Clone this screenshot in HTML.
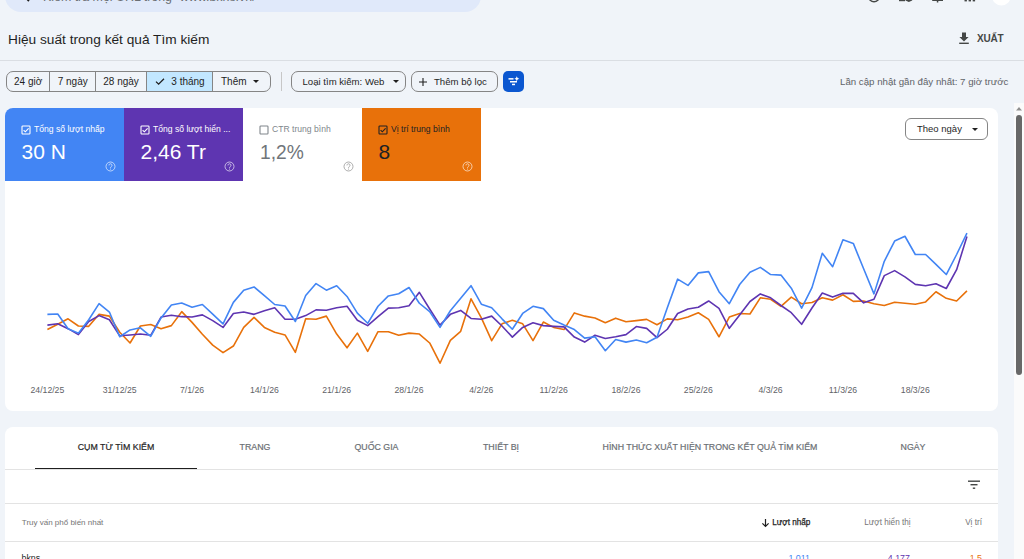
<!DOCTYPE html>
<html><head><meta charset="utf-8">
<style>
*{box-sizing:border-box;margin:0;padding:0}
html,body{width:1024px;height:559px;overflow:hidden}
body{background:#f0f4f9;font-family:"Liberation Sans",sans-serif;position:relative;color:#1f1f1f}
.a{position:absolute;white-space:nowrap}
.search{left:5px;top:-20px;width:476px;height:32px;border-radius:16px;background:#e0e9fa}
.ph{left:43px;top:-10px;font-size:12.4px;color:#6b6f74;line-height:14px}
.title{left:8px;top:32px;font-size:13.7px;color:#1f1f1f;line-height:16px}
.xuat{left:977px;top:33px;letter-spacing:-0.2px;font-size:10px;font-weight:bold;color:#444746;line-height:11px}
.divider{left:0;top:60px;width:1024px;height:1px;background:#dadee3}
.chips{left:6px;top:71px;width:265px;height:21px;border:1px solid #858585;border-radius:7px;overflow:hidden}
.chip{top:0;height:19px;font-size:10px;line-height:19px;color:#1f1f1f;text-align:center}
.chip.bd{border-right:1px solid #858585}
.chip.sel{background:#c2e7ff}
.vsep{left:281px;top:72px;width:1px;height:19px;background:#c7c7c7}
.pill{top:71px;height:21px;border:1px solid #858585;border-radius:7px}
.ptxt{top:0;font-size:9.6px;line-height:19px;color:#1f1f1f}
.fbtn{left:503px;top:71px;width:21px;height:21px;border-radius:5px;background:#0b57d0}
.upd{left:840px;top:75.5px;font-size:9.7px;color:#5f6368;line-height:12px}
.card{left:5px;top:108px;width:993px;height:302.5px;background:#fff;border-radius:8px;overflow:hidden}
.metric{top:0;height:73px;width:119px;overflow:hidden}
.mlabel{left:29px;top:16px;font-size:8.6px;line-height:11px}
.mval{left:16.5px;top:32px;font-size:21px;line-height:24px}
.mline{left:0;top:72px;width:476px;height:1px;background:#e3e3e3}
.dd{left:900px;top:9.7px;width:83px;height:22.3px;border:1px solid #858585;border-radius:6px}
.ddt{left:11px;top:0.8px;font-size:9.5px;line-height:19.5px;color:#1f1f1f}
.dl{top:276.8px;width:60px;text-align:center;font-size:8.7px;color:#5f6368;line-height:11px}
.tabs{left:5px;top:427px;width:993px;height:140px;background:#fff;border-radius:8px;overflow:hidden}
.tab{top:14.2px;width:300px;text-align:center;font-size:8.8px;line-height:12px;color:#6b6f74;-webkit-text-stroke:0.2px currentColor}
.tab.on{color:#1f1f1f}
.uline{left:30px;top:40.5px;width:162px;height:2.5px;background:#1f1f1f}
.hr{left:0;width:993px;height:1px;background:#e3e3e3}
.th{top:90.7px;font-size:8.2px;line-height:10px;color:#5f6368}
.td{top:124.5px;font-size:8.9px;line-height:12px}
.scroll{left:1014px;top:103px;width:10px;height:456px;background:#fbfbfb}
.thumb{left:2px;top:12px;width:6px;height:260px;border-radius:3px;background:#686868}
</style></head><body>
<div class="a search"></div>
<svg class="a" style="left:17px;top:-11px" width="14" height="14" viewBox="0 0 14 14"><circle cx="6" cy="6" r="4" fill="none" stroke="#1f1f1f" stroke-width="1.6"/><path d="M9 9 L12 12" stroke="#1f1f1f" stroke-width="1.8"/></svg>
<div class="a ph">Kiểm tra mọi URL trong "www.bkns.vn/"</div>
<svg class="a" style="left:860px;top:0" width="160" height="8" viewBox="0 0 160 8">
 <circle cx="14" cy="-3.5" r="5.3" fill="none" stroke="#444746" stroke-width="1.4"/>
 <rect x="39" y="-1" width="6" height="2.2" fill="#444746"/><path d="M45.5 -1 H52.2 V0.6 L48.8 2 L45.5 0.6 Z" fill="#444746"/>
 <rect x="72.2" y="-1" width="10.8" height="2" fill="#444746"/><rect x="76.8" y="0.5" width="1.5" height="2" fill="#444746"/>
 <rect x="104.5" y="-1" width="2.4" height="2.4" fill="#444746"/><rect x="108.6" y="-1" width="2.4" height="2.4" fill="#444746"/><rect x="112.7" y="-1" width="2.4" height="2.4" fill="#444746"/>
 <circle cx="141.4" cy="-4" r="9.4" fill="#fff"/>
</svg>
<div class="a title">Hiệu suất trong kết quả Tìm kiếm</div>
<svg class="a" style="left:958px;top:31px" width="12" height="14" viewBox="0 0 12 14"><path d="M4 1.5 H8 V6 H10.6 L6 10.6 L1.4 6 H4 Z" fill="#444746"/><rect x="1.2" y="11.6" width="9.6" height="1.4" fill="#444746"/></svg>
<div class="a xuat">XUẤT</div>
<div class="a divider"></div>
<div class="a chips">
 <div class="a chip bd" style="left:0;width:43.3px">24 giờ</div>
 <div class="a chip bd" style="left:43.3px;width:45.9px">7 ngày</div>
 <div class="a chip bd" style="left:89.2px;width:50.8px">28 ngày</div>
 <div class="a chip sel bd" style="left:140px;width:66px"><svg class="a" style="left:8.3px;top:5px" width="10" height="9" viewBox="0 0 10 9"><path d="M1 4.6 L3.6 7.2 L9 1.8" fill="none" stroke="#1f1f1f" stroke-width="1.3"/></svg><span class="a" style="left:24.3px;top:0">3 tháng</span></div>
 <div class="a chip" style="left:206px;width:58px;text-align:left;padding-left:8px">Thêm</div>
 <svg class="a" style="left:244.5px;top:7px" width="8" height="5"><path d="M1 1 L7 1 L4 4 Z" fill="#1f1f1f"/></svg>
</div>
<div class="a vsep"></div>
<div class="a pill" style="left:291px;width:115px"><div class="a ptxt" style="left:10.5px">Loại tìm kiếm: Web</div><svg class="a" style="left:100px;top:7px" width="8" height="5"><path d="M1 1 L7 1 L4 4 Z" fill="#1f1f1f"/></svg></div>
<div class="a pill" style="left:411px;width:87px"><svg class="a" style="left:6px;top:5px" width="10" height="10"><path d="M5 1 V9 M1 5 H9" stroke="#1f1f1f" stroke-width="1.1"/></svg><div class="a ptxt" style="left:22px">Thêm bộ lọc</div></div>
<div class="a fbtn"><svg class="a" style="left:0;top:0" width="21" height="21" viewBox="0 0 21 21"><rect x="5.5" y="7.1" width="5" height="1.5" fill="#fff"/><rect x="7" y="10" width="7" height="1.5" fill="#fff"/><rect x="9" y="12.7" width="3" height="1.5" fill="#fff"/><path d="M13.8 5.2 L14.6 6.9 L16.3 7.7 L14.6 8.5 L13.8 10.2 L13 8.5 L11.3 7.7 L13 6.9 Z" fill="#fff"/></svg></div>
<div class="a upd">Lần cập nhật gần đây nhất: 7 giờ trước</div>
<div class="a card">
 <div class="a mline"></div>
 <div class="a metric" style="left:0px;background:#4285f4;color:#fff"><svg class="a" style="left:15.7px;top:16.6px" width="10" height="10" viewBox="0 0 10 10"><rect x="1" y="1" width="8" height="8" rx="0.8" fill="none" stroke="#fff" stroke-width="1.1"/><path d="M2.6 5.1 L4.3 6.8 L7.6 3.4" fill="none" stroke="#fff" stroke-width="1.15"/></svg><div class="a mlabel">Tổng số lượt nhấp</div><div class="a mval">30 N</div><svg class="a" style="left:100px;top:53px" width="11" height="11" viewBox="0 0 11 11"><circle cx="5.5" cy="5.5" r="4.5" fill="none" stroke="rgba(255,255,255,.75)" stroke-width="0.85"/><path d="M4.0 4.4 A1.5 1.5 0 1 1 6.6 5.3 C6.0 5.8 5.5 6.0 5.5 6.8" fill="none" stroke="rgba(255,255,255,.75)" stroke-width="0.85"/><circle cx="5.5" cy="8.0" r="0.55" fill="rgba(255,255,255,.75)"/></svg></div><div class="a metric" style="left:119px;background:#5e35b1;color:#fff"><svg class="a" style="left:15.7px;top:16.6px" width="10" height="10" viewBox="0 0 10 10"><rect x="1" y="1" width="8" height="8" rx="0.8" fill="none" stroke="#fff" stroke-width="1.1"/><path d="M2.6 5.1 L4.3 6.8 L7.6 3.4" fill="none" stroke="#fff" stroke-width="1.15"/></svg><div class="a mlabel">Tổng số lượt hiển ...</div><div class="a mval">2,46 Tr</div><svg class="a" style="left:100px;top:53px" width="11" height="11" viewBox="0 0 11 11"><circle cx="5.5" cy="5.5" r="4.5" fill="none" stroke="rgba(255,255,255,.75)" stroke-width="0.85"/><path d="M4.0 4.4 A1.5 1.5 0 1 1 6.6 5.3 C6.0 5.8 5.5 6.0 5.5 6.8" fill="none" stroke="rgba(255,255,255,.75)" stroke-width="0.85"/><circle cx="5.5" cy="8.0" r="0.55" fill="rgba(255,255,255,.75)"/></svg></div><div class="a metric" style="left:238px;background:#fff;color:#80868b"><svg class="a" style="left:15.7px;top:16.6px" width="10" height="10" viewBox="0 0 10 10"><rect x="1" y="1" width="8" height="8" rx="0.8" fill="none" stroke="#80868b" stroke-width="1.1"/></svg><div class="a mlabel">CTR trung bình</div><div class="a mval" style="transform:scaleX(0.915);transform-origin:0 0;color:#70757a">1,2%</div><svg class="a" style="left:100px;top:53px" width="11" height="11" viewBox="0 0 11 11"><circle cx="5.5" cy="5.5" r="4.5" fill="none" stroke="#9e9e9e" stroke-width="0.85"/><path d="M4.0 4.4 A1.5 1.5 0 1 1 6.6 5.3 C6.0 5.8 5.5 6.0 5.5 6.8" fill="none" stroke="#9e9e9e" stroke-width="0.85"/><circle cx="5.5" cy="8.0" r="0.55" fill="#9e9e9e"/></svg></div><div class="a metric" style="left:357px;background:#e8710a;color:#202124"><svg class="a" style="left:15.7px;top:16.6px" width="10" height="10" viewBox="0 0 10 10"><rect x="1" y="1" width="8" height="8" rx="0.8" fill="none" stroke="#202124" stroke-width="1.1"/><path d="M2.6 5.1 L4.3 6.8 L7.6 3.4" fill="none" stroke="#202124" stroke-width="1.15"/></svg><div class="a mlabel">Vị trí trung bình</div><div class="a mval">8</div><svg class="a" style="left:100px;top:53px" width="11" height="11" viewBox="0 0 11 11"><circle cx="5.5" cy="5.5" r="4.5" fill="none" stroke="rgba(255,255,255,.75)" stroke-width="0.85"/><path d="M4.0 4.4 A1.5 1.5 0 1 1 6.6 5.3 C6.0 5.8 5.5 6.0 5.5 6.8" fill="none" stroke="rgba(255,255,255,.75)" stroke-width="0.85"/><circle cx="5.5" cy="8.0" r="0.55" fill="rgba(255,255,255,.75)"/></svg></div>
 <div class="a dd"><div class="a ddt">Theo ngày</div><svg class="a" style="left:65px;top:8px" width="8" height="5"><path d="M1 1 L7 1 L4 4 Z" fill="#1f1f1f"/></svg></div>
 <svg class="a" style="left:-5px;top:-108px" width="1024" height="559">
  <polyline fill="none" stroke="#e8710a" stroke-width="1.6" stroke-linejoin="round" points="47.40,329.56 57.73,324.19 68.06,318.82 78.40,325.98 88.73,326.34 99.06,314.35 109.39,316.14 119.72,332.24 130.06,342.98 140.39,325.98 150.72,324.55 161.05,328.67 171.38,325.62 181.72,311.66 192.05,322.40 202.38,334.21 212.71,345.13 223.04,352.65 233.38,346.03 243.71,327.41 254.04,317.39 264.37,327.41 274.70,332.24 285.04,334.93 295.37,352.29 305.70,318.82 316.03,319.18 326.36,316.14 336.70,334.03 347.03,347.82 357.36,333.14 367.69,351.39 378.02,331.71 388.36,331.71 398.69,335.29 409.02,333.14 419.35,334.03 429.68,342.98 440.02,363.21 450.35,340.30 460.68,331.35 471.01,298.78 481.34,317.93 491.68,340.66 502.01,323.83 512.34,320.25 522.67,323.83 533.00,340.66 543.34,322.04 553.67,327.41 564.00,329.56 574.33,312.92 584.66,316.14 595.00,317.93 605.33,322.76 615.66,318.15 625.99,321.73 636.32,320.66 646.66,319.40 656.99,324.77 667.32,318.87 677.65,319.76 687.98,317.08 698.32,312.78 708.65,319.40 718.98,336.76 729.31,317.08 739.64,313.50 749.98,314.03 760.31,297.82 770.64,299.25 780.97,306.41 791.30,297.10 801.64,303.72 811.97,302.47 822.30,297.82 832.63,300.14 842.96,294.77 853.30,301.39 863.63,301.04 873.96,303.72 884.29,305.51 894.62,302.29 904.96,303.18 915.29,304.26 925.62,301.93 935.95,291.73 946.28,298.35 956.62,301.04 966.95,290.84"/>
  <polyline fill="none" stroke="#5e35b1" stroke-width="1.6" stroke-linejoin="round" points="47.40,325.09 57.73,323.83 68.06,328.67 78.40,334.57 88.73,321.51 99.06,315.60 109.39,319.72 119.72,335.82 130.06,334.93 140.39,334.03 150.72,335.29 161.05,317.03 171.38,315.24 181.72,316.67 192.05,317.03 202.38,314.88 212.71,320.61 223.04,327.41 233.38,313.45 243.71,312.02 254.04,314.35 264.37,310.77 274.70,307.73 285.04,319.18 295.37,319.18 305.70,315.60 316.03,309.87 326.36,310.23 336.70,307.73 347.03,306.29 357.36,320.25 367.69,325.62 378.02,316.67 388.36,308.08 398.69,307.73 409.02,305.76 419.35,292.33 429.68,308.98 440.02,325.09 450.35,314.35 460.68,310.41 471.01,318.46 481.34,319.18 491.68,316.14 502.01,325.98 512.34,337.08 522.67,327.41 533.00,322.76 543.34,325.62 553.67,326.34 564.00,326.88 574.33,337.08 584.66,342.09 595.00,335.29 605.33,338.51 615.66,336.76 625.99,334.62 636.32,326.56 646.66,328.35 656.99,337.66 667.32,329.25 677.65,313.50 687.98,309.02 698.32,307.23 708.65,300.97 718.98,308.31 729.31,328.35 739.64,314.93 749.98,301.51 760.31,293.88 770.64,297.82 780.97,305.51 791.30,312.67 801.64,324.30 811.97,308.02 822.30,292.98 832.63,297.10 842.96,293.34 853.30,293.34 863.63,302.83 873.96,299.25 884.29,275.62 894.62,270.61 904.96,276.88 915.29,284.39 925.62,285.82 935.95,283.68 946.28,288.51 956.62,269.72 966.95,236.61"/>
  <polyline fill="none" stroke="#4285f4" stroke-width="1.6" stroke-linejoin="round" points="47.40,314.35 57.73,313.99 68.06,328.67 78.40,333.14 88.73,319.72 99.06,303.61 109.39,312.02 119.72,336.72 130.06,329.92 140.39,327.77 150.72,336.36 161.05,317.93 171.38,305.04 181.72,303.07 192.05,307.19 202.38,304.50 212.71,314.17 223.04,323.83 233.38,302.36 243.71,290.19 254.04,286.97 264.37,295.56 274.70,304.50 285.04,305.94 295.37,321.51 305.70,295.56 316.03,283.56 326.36,290.19 336.70,285.71 347.03,296.45 357.36,313.10 367.69,323.30 378.02,306.29 388.36,295.91 398.69,293.77 409.02,287.50 419.35,303.25 429.68,311.66 440.02,327.41 450.35,310.77 460.68,298.24 471.01,285.71 481.34,304.15 491.68,307.73 502.01,318.82 512.34,329.20 522.67,313.45 533.00,306.29 543.34,308.62 553.67,320.25 564.00,325.09 574.33,329.56 584.66,338.15 595.00,336.72 605.33,350.68 615.66,339.45 625.99,342.13 636.32,339.99 646.66,342.67 656.99,337.30 667.32,307.77 677.65,279.14 687.98,285.40 698.32,272.87 708.65,271.62 718.98,291.66 729.31,303.65 739.64,284.50 749.98,272.33 760.31,267.39 770.64,274.55 780.97,275.09 791.30,288.15 801.64,308.20 811.97,287.61 822.30,253.25 832.63,266.67 842.96,239.83 853.30,243.41 863.63,268.82 873.96,293.88 884.29,261.31 894.62,241.08 904.96,236.25 915.29,254.50 925.62,254.50 935.95,264.35 946.28,274.55 956.62,254.50 966.95,233.03"/>
 </svg>
 <div class="a dl" style="left:12.4px">24/12/25</div><div class="a dl" style="left:84.7px">31/12/25</div><div class="a dl" style="left:157.0px">7/1/26</div><div class="a dl" style="left:229.4px">14/1/26</div><div class="a dl" style="left:301.7px">21/1/26</div><div class="a dl" style="left:374.0px">28/1/26</div><div class="a dl" style="left:446.3px">4/2/26</div><div class="a dl" style="left:518.7px">11/2/26</div><div class="a dl" style="left:591.0px">18/2/26</div><div class="a dl" style="left:663.3px">25/2/26</div><div class="a dl" style="left:735.6px">4/3/26</div><div class="a dl" style="left:808.0px">11/3/26</div><div class="a dl" style="left:880.3px">18/3/26</div>
</div>
<div class="a tabs">
 <div class="a tab on" style="left:-39px">CỤM TỪ TÌM KIẾM</div><div class="a tab" style="left:100px">TRANG</div><div class="a tab" style="left:221.5px">QUỐC GIA</div><div class="a tab" style="left:346px">THIẾT BỊ</div><div class="a tab" style="left:555px">HÌNH THỨC XUẤT HIỆN TRONG KẾT QUẢ TÌM KIẾM</div><div class="a tab" style="left:758px">NGÀY</div>
 <div class="a uline"></div>
 <div class="a hr" style="top:42px"></div>
 <svg class="a" style="left:962px;top:52px" width="14" height="12" viewBox="0 0 14 12"><rect x="1" y="1.5" width="12" height="1.4" fill="#444746"/><rect x="3.5" y="5" width="7" height="1.4" fill="#444746"/><rect x="5.8" y="8.5" width="2.4" height="1.4" fill="#444746"/></svg>
 <div class="a hr" style="top:76px"></div>
 <div class="a th" style="left:16.8px;top:91.2px;font-size:8px;color:#757575">Truy vấn phổ biến nhất</div>
 <svg class="a" style="left:756px;top:90.5px" width="9" height="10" viewBox="0 0 9 10"><path d="M4.5 1 V8.5 M1.4 5.4 L4.5 8.5 L7.6 5.4" fill="none" stroke="#1f1f1f" stroke-width="1.2"/></svg>
 <div class="a th" style="right:187.6px;color:#1f1f1f;-webkit-text-stroke:0.25px #1f1f1f">Lượt nhấp</div>
 <div class="a th" style="right:87.4px;color:#757575">Lượt hiển thị</div>
 <div class="a th" style="right:16px;color:#757575">Vị trí</div>
 <div class="a hr" style="top:114px"></div>
 <div class="a td" style="left:16.5px;color:#1f1f1f">bkns</div>
 <div class="a td" style="right:188px;color:#4285f4">1.011</div>
 <div class="a td" style="right:88px;color:#5e35b1">4.177</div>
 <div class="a td" style="right:16px;color:#e8710a">1,5</div>
</div>
<div class="a scroll"><svg class="a" style="left:1px;top:3px" width="8" height="5"><path d="M1 4.5 L4 1 L7 4.5 Z" fill="#909090"/></svg><div class="a thumb"></div></div>
</body></html>
